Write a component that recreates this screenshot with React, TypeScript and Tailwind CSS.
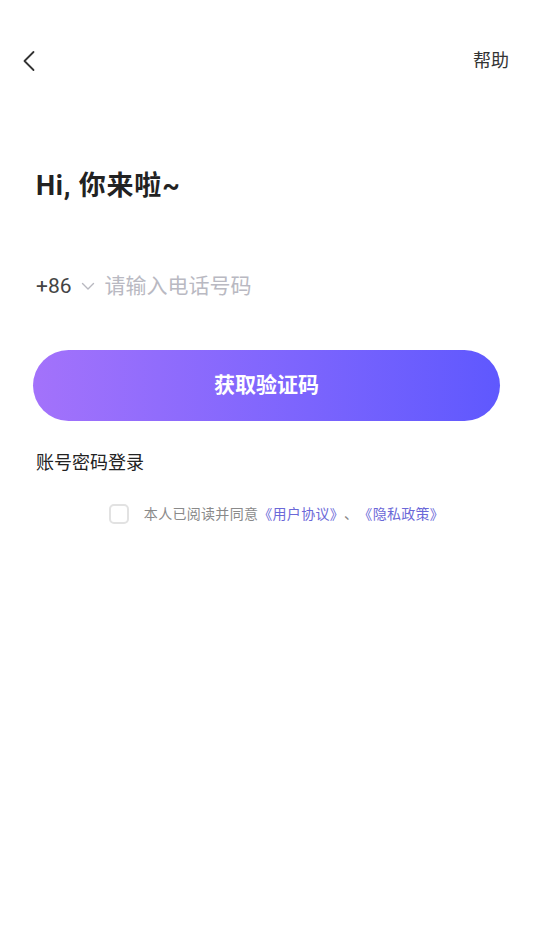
import React from "react";

export default function App() {
  const font = { fontFamily: 'Roboto, "Noto Sans CJK SC", "Noto Sans", sans-serif' };
  return (
    <div className="w-[533px] h-[948px] bg-white [text-spacing-trim:space-all]" style={font}>
      <div className="flex items-center justify-between h-[40px] mt-[41px] pl-[22px] pr-[24px]">
        <svg width="14" height="22" viewBox="0 0 14 22" fill="none">
          <path d="M11.5 2 L2.5 11 L11.5 20" stroke="#333" strokeWidth="1.8" strokeLinecap="round" strokeLinejoin="round" />
        </svg>
        <span className="text-[18px] leading-[24px] text-[#333]">帮助</span>
      </div>

      <div className="px-[36px]">
        <h1 className="mt-[87px] text-[27px] leading-[36px] tracking-[0.8px] font-bold text-[#222]">Hi, 你来啦~</h1>

        <div className="mt-[67px] flex items-center h-[30px]">
          <span className="text-[21px] text-[#444] leading-[30px]">+86</span>
          <svg className="ml-[9px]" width="14" height="10" viewBox="0 0 14 10" fill="none">
            <path d="M1.5 2.5 L7 8 L12.5 2.5" stroke="#b8b8c0" strokeWidth="1.4" strokeLinecap="round" strokeLinejoin="round" />
          </svg>
          <span className="ml-[10px] text-[21px] text-[#b9b9c2] leading-[30px]">请输入电话号码</span>
        </div>
      </div>

      <div className="px-[33px] mt-[49px]">
        <button className="w-full h-[71px] rounded-full bg-gradient-to-r from-[#a372fb] to-[#5f58fe] text-white text-[21px] font-bold">
          获取验证码
        </button>
      </div>

      <div className="px-[36px] mt-[29px]">
        <span className="text-[18px] leading-[26px] text-[#222]">账号密码登录</span>
      </div>

      <div className="mt-[28px] flex items-center justify-center pl-[20px]">
        <div className="w-[20px] h-[20px] rounded-[5px] border-2 border-[#e2e2e2]" />
        <span className="ml-[15px] text-[14px] leading-[20px] tracking-[0.3px] text-[#8a8a8a]">
          本人已阅读并同意<span className="text-[#6b68d8]">《用户协议》</span>、<span className="text-[#6b68d8]">《隐私政策》</span>
        </span>
      </div>
    </div>
  );
}
